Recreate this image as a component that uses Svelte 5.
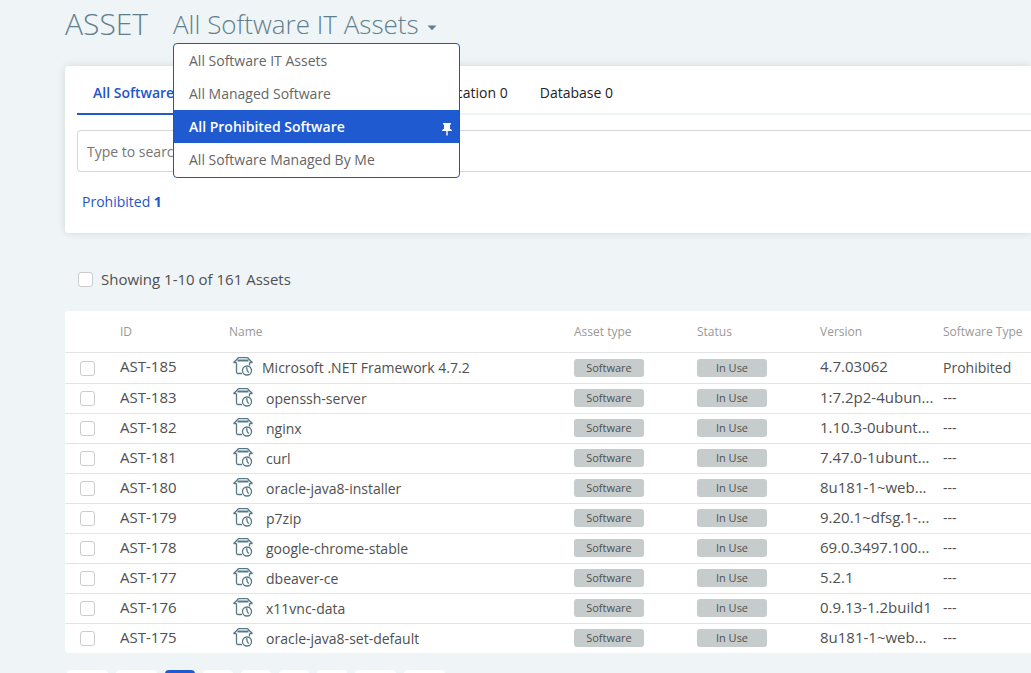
<script>
  const views = [
    'All Software IT Assets',
    'All Managed Software',
    'All Prohibited Software',
    'All Software Managed By Me'
  ];
  let selected = $state('All Prohibited Software');

  const tabs = [
    { label: 'All Software', kind: 'active' },
    { label: 'Application 0', kind: '' },
    { label: 'Database 0', kind: '' }
  ];

  const assets = [
    { id: 'AST-185', name: 'Microsoft .NET Framework 4.7.2', version: '4.7.03062', type: 'Prohibited' },
    { id: 'AST-183', name: 'openssh-server', version: '1:7.2p2-4ubun...', type: '---' },
    { id: 'AST-182', name: 'nginx', version: '1.10.3-0ubunt...', type: '---' },
    { id: 'AST-181', name: 'curl', version: '7.47.0-1ubunt...', type: '---' },
    { id: 'AST-180', name: 'oracle-java8-installer', version: '8u181-1~web...', type: '---' },
    { id: 'AST-179', name: 'p7zip', version: '9.20.1~dfsg.1-...', type: '---' },
    { id: 'AST-178', name: 'google-chrome-stable', version: '69.0.3497.100...', type: '---' },
    { id: 'AST-177', name: 'dbeaver-ce', version: '5.2.1', type: '---' },
    { id: 'AST-176', name: 'x11vnc-data', version: '0.9.13-1.2build1', type: '---' },
    { id: 'AST-175', name: 'oracle-java8-set-default', version: '8u181-1~web...', type: '---' }
  ];

  const pages = [
    { label: 'First page', kind: 'long' },
    { label: 'Previous page', kind: 'long' },
    { label: 'Page 1', kind: 'current' },
    { label: 'Page 2', kind: '' },
    { label: 'Page 3', kind: '' },
    { label: 'Page 4', kind: '' },
    { label: 'Page 5', kind: '' },
    { label: 'Next page', kind: 'long' },
    { label: 'Last page', kind: 'long' }
  ];
</script>

<div class="page">
  <header class="heading">
    <h1>ASSET</h1>
    <div class="picker">
      <button class="picker-toggle" type="button" aria-expanded="true">
        All Software IT Assets
        <svg class="caret" viewBox="0 0 10 6" aria-hidden="true"><path d="M0.5 0.5h9L5 5.2z" /></svg>
      </button>
      <ul class="menu">
        {#each views as view}
          <li>
            <button type="button" class:selected={view === selected} onclick={() => (selected = view)}>
              <span>{view}</span>
              {#if view === selected}
                <svg class="pin" viewBox="0 0 10 13" aria-hidden="true">
                  <path d="M1 0h8v1.6H8v4.1c1.2.5 2 1.2 2 2.3H5.7v4L5 13l-.7-1V8H0c0-1.1.8-1.8 2-2.3V1.6H1z" />
                </svg>
              {/if}
            </button>
          </li>
        {/each}
      </ul>
    </div>
  </header>

  <section class="filters">
    <nav class="tabs">
      {#each tabs as tab}
        <button type="button" class="tab {tab.kind}">{tab.label}</button>
      {/each}
    </nav>
    <input class="search" type="text" placeholder="Type to search" aria-label="Search assets" />
    <a class="quick" href="#prohibited">Prohibited <b>1</b></a>
  </section>

  <label class="showing">
    <input type="checkbox" />
    Showing 1-10 of 161 Assets
  </label>

  <table>
    <thead>
      <tr>
        <th class="c-check"></th>
        <th class="c-id">ID</th>
        <th>Name</th>
        <th class="c-mid">Asset type</th>
        <th class="c-mid">Status</th>
        <th class="c-mid">Version</th>
        <th class="c-last">Software Type</th>
      </tr>
    </thead>
    <tbody>
      {#each assets as asset, i}
        <tr>
          <td class="pick"><input type="checkbox" aria-label="Select {asset.id}" /></td>
          <td class="code">{asset.id}</td>
          <td class="title">
            <div class="name" class:first={i === 0}>
              <svg class="box" viewBox="0 0 20 19" aria-hidden="true">
                <path d="M4.5 1.8Q5 .7 6 .7h8q1 0 1.5 1.1L19.3 5.5M4.5 1.8L.7 5.500" />
                <path d="M4.500 3.500h11" class="thick" />
                <path d="M.5 5.500h3M16.500 5.500h3M3.500 5.500v9.500q0 1.500 1.500 1.500H9M16.500 5.500v3" />
                <circle cx="14" cy="13.500" r="4.500" />
                <path d="M12.800 10.800h1l.4 2.700 1.500 2.200" />
              </svg>
              <span>{asset.name}</span>
            </div>
          </td>
          <td><span class="badge">Software</span></td>
          <td><span class="badge">In Use</span></td>
          <td class="code">{asset.version}</td>
          <td>{asset.type}</td>
        </tr>
      {/each}
    </tbody>
  </table>

  <nav class="pagination" aria-label="Pagination">
    {#each pages as page}
      <button type="button" class={page.kind} aria-label={page.label}></button>
    {/each}
  </nav>
</div>

<style>
  :global(body) {
    background: #eff4f7;
  }

  .page {
    box-sizing: border-box;
    height: 100vh;
    overflow: hidden;
    padding-left: 65px;
    font: 14px/20px "Open Sans", "Noto Sans", sans-serif;
    color: #505050;
  }

  button,
  input {
    font: inherit;
    color: inherit;
  }

  button {
    border: 0;
    background: none;
    padding: 0;
    cursor: pointer;
  }

  .heading {
    display: flex;
    gap: 21px;
    height: 66px;
    color: #5f7f8e;
  }

  h1,
  .picker-toggle {
    margin: 0;
    font-size: 26px;
    font-weight: 300;
    line-height: 48px;
    white-space: nowrap;
  }

  h1 {
    min-width: 87px;
    font-size: 30px;
  }

  .picker {
    position: relative;
  }

  .picker-toggle {
    display: flex;
    align-items: center;
    gap: 8px;
  }

  .caret {
    width: 10px;
    height: 6px;
    margin-top: 8px;
    fill: #5f7f8e;
  }

  .menu {
    position: absolute;
    z-index: 2;
    top: 43px;
    left: 0;
    box-sizing: border-box;
    width: 287px;
    margin: 0;
    padding: 0;
    list-style: none;
    background: #fff;
    border: 1px solid #2f4fa8;
    border-radius: 4px;
    overflow: hidden;
  }

  .menu button {
    display: flex;
    align-items: center;
    justify-content: space-between;
    width: 100%;
    height: 33px;
    padding: 0 7px 0 15px;
    color: #666;
  }

  .menu li:last-child {
    padding-bottom: 1px;
  }

  .menu button.selected {
    background: #1f5ad1;
    color: #fff;
    font-weight: 600;
  }

  .pin {
    width: 10px;
    height: 13px;
    margin-top: 5px;
    fill: #fff;
  }

  .filters {
    box-sizing: border-box;
    padding: 0 0 21px 12px;
    background: #fff;
    border-radius: 4px 0 0 4px;
    box-shadow: 0 0 8px #0000001f;
  }

  .tabs {
    display: flex;
    border-bottom: 2px solid #eff4f7;
  }

  .tab {
    height: 49px;
    margin-bottom: -2px;
    padding: 6px 16px 0;
    border-bottom: 2px solid transparent;
    color: #222;
    white-space: nowrap;
  }

  .tab.active {
    width: 330px;
    color: #1f55c9;
    font-weight: 600;
    text-align: left;
    border-color: #1f5ad1;
  }

  .search {
    display: block;
    box-sizing: border-box;
    width: 100%;
    height: 42px;
    margin: 15px 0 20px;
    padding: 0 9px;
    border: 1px solid #d6d6d6;
    border-right: 0;
    border-radius: 4px 0 0 4px;
  }

  .search::placeholder {
    color: #757575;
    opacity: 1;
  }

  .quick {
    display: inline-block;
    margin-left: 5px;
    color: #1f55c9;
    text-decoration: none;
  }

  .showing {
    display: flex;
    align-items: center;
    gap: 8px;
    margin: 36px 0 22px 13px;
    width: max-content;
    font-size: 15px;
  }

  input[type="checkbox"] {
    appearance: none;
    display: block;
    box-sizing: border-box;
    width: 15px;
    height: 15px;
    margin: 0;
    background: #fff;
    border: 1px solid #ccc;
    border-radius: 3px;
  }

  input[type="checkbox"]:checked {
    background: #1f5ad1;
  }

  table {
    width: 100%;
    table-layout: fixed;
    border-collapse: separate;
    border-spacing: 0;
    background: #fff;
    border-radius: 4px 0 0 4px;
  }

  th,
  td {
    box-sizing: border-box;
    height: 30px;
    padding: 0;
    text-align: left;
    white-space: nowrap;
    border-bottom: 1px solid #e4e4e4;
  }

  td {
    padding-bottom: 1px;
  }

  td.pick {
    padding-bottom: 0;
  }

  td.code {
    padding-bottom: 4px;
    font-size: 15px;
  }

  td.title {
    padding-bottom: 3px;
  }

  th {
    height: 42px;
    font-size: 12px;
    font-weight: 400;
    color: #999;
  }

  tbody tr:first-child td {
    height: 31px;
  }

  tbody tr:last-child td {
    height: 29px;
    border-bottom: 0;
  }

  td input[type="checkbox"] {
    margin-left: 15px;
  }

  .c-check {
    width: 55px;
  }

  .c-id {
    width: 109px;
  }

  .c-mid {
    width: 123px;
  }

  .c-last {
    width: 88px;
  }

  .name {
    display: flex;
    align-items: center;
    gap: 13px;
    padding-left: 4px;
  }

  .name.first {
    gap: 9px;
  }

  .name span {
    padding-top: 3px;
  }

  .box {
    width: 20px;
    height: 19px;
    fill: none;
    stroke: #557887;
    stroke-width: 1.3;
  }

  .box .thick {
    stroke-width: 2;
  }

  .badge {
    display: block;
    width: 70px;
    border-radius: 3px;
    background: #c6cccc;
    font-size: 11px;
    line-height: 18px;
    text-align: center;
  }

  .pagination {
    display: flex;
    gap: 8px;
    margin: 17px 0 0 2px;
  }

  .pagination button {
    width: 30px;
    height: 30px;
    border-radius: 4px;
    background: #fff;
  }

  .pagination .long {
    width: 41px;
  }

  .pagination .current {
    background: #1f5ad1;
  }
</style>
